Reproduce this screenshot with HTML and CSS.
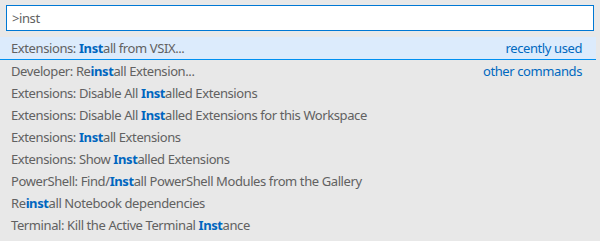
FILE: index.html
```html
<!DOCTYPE html>
<html>
<head>
<meta charset="utf-8">
<link rel="stylesheet" href="styles.css">
</head>
<body>
<div class="quick-input">
  <div class="input-wrap">
    <div class="input">&gt;inst</div>
  </div>
  <div class="list">
    <div class="row selected separator"><span class="label">Extensions: <b>Inst</b>all from VSIX...</span><span class="group">recently used</span></div>
    <div class="row"><span class="label">Developer: Re<b>inst</b>all Extension...</span><span class="group">other commands</span></div>
    <div class="row"><span class="label">Extensions: Disable All <b>Inst</b>alled Extensions</span></div>
    <div class="row"><span class="label">Extensions: Disable All <b>Inst</b>alled Extensions for this Workspace</span></div>
    <div class="row"><span class="label">Extensions: <b>Inst</b>all Extensions</span></div>
    <div class="row"><span class="label">Extensions: Show <b>Inst</b>alled Extensions</span></div>
    <div class="row"><span class="label">PowerShell: Find/<b>Inst</b>all PowerShell Modules from the Gallery</span></div>
    <div class="row"><span class="label">Re<b>inst</b>all Notebook dependencies</span></div>
    <div class="row"><span class="label">Terminal: Kill the Active Terminal <b>Inst</b>ance</span></div>
  </div>
</div>
</body>
</html>
```
FILE: styles.css
```css
html, body {
  margin: 0;
  padding: 0;
  background: #e8e8e8;
}
.quick-input {
  width: 600px;
  height: 241px;
  font-family: "Noto Sans", "Open Sans", sans-serif;
  font-size: 13px;
  letter-spacing: -0.4px;
  color: #616161;
}
.input-wrap {
  padding: 5px 6px 6px 6px;
}
.input {
  box-sizing: border-box;
  height: 26px;
  background: #ffffff;
  border: 1px solid #0078d4;
  padding: 0 5px;
  line-height: 24px;
  color: #616161;
}
.list {
  width: 596px;
}
.row {
  display: flex;
  justify-content: space-between;
  align-items: center;
  height: 22px;
  padding: 0 14px 0 11px;
  white-space: nowrap;
}
.row.selected {
  background: #dcebfc;
}
.row.separator {
  border-bottom: 1px solid #0090f1;
}
.row b {
  font-weight: 700;
  color: #0066bf;
}
.group {
  color: #0069c0;
}
```
